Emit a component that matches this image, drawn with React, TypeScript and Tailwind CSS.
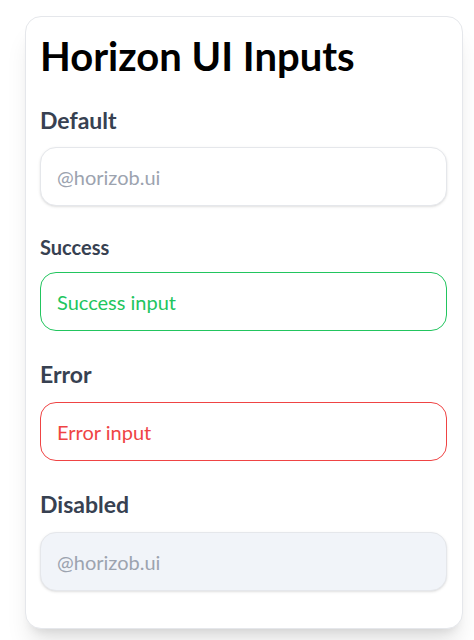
const font = { fontFamily: 'Lato, "Noto Sans", sans-serif' };

type FieldProps = {
  label: string;
  labelClass: string;
  inputClass: string;
  value?: string;
  placeholder?: string;
  disabled?: boolean;
};

const Field = ({ label, labelClass, inputClass, value, placeholder, disabled }: FieldProps) => (
  <div className="flex flex-col">
    <label className={`font-bold text-[#374151] ${labelClass}`}>{label}</label>
    <input
      readOnly
      disabled={disabled}
      defaultValue={value}
      placeholder={placeholder}
      className={`h-[59px] w-full rounded-2xl border px-4 text-[20px] outline-none placeholder:text-[#9ca3af] ${inputClass}`}
    />
  </div>
);

export default function App() {
  return (
    <div className="min-h-screen bg-white pt-4" style={font}>
      <div className="ml-[25px] w-[438px] rounded-2xl border border-[#e5e7eb] bg-white pb-[37px] pl-[14px] pr-[15px] pt-[13px] shadow-xl">
        <h1 className="text-[40px] font-bold leading-[52px] text-black">Horizon UI Inputs</h1>

        <div className="mt-[23px] flex flex-col gap-[28px]">
          <Field
            label="Default"
            labelClass="text-[23px] leading-[30px] mb-[12px]"
            inputClass="border-[#e5e7eb] bg-white shadow-sm"
            placeholder="@horizob.ui"
          />
          <Field
            label="Success"
            labelClass="text-[20px] leading-[26px] mb-[12px]"
            inputClass="border-[#22c55e] bg-white text-[#22c55e]"
            value="Success input"
          />
          <Field
            label="Error"
            labelClass="text-[23px] leading-[31px] mb-[12px]"
            inputClass="border-[#ef4444] bg-white text-[#ef4444]"
            value="Error input"
          />
          <Field
            label="Disabled"
            labelClass="text-[23px] leading-[31px] mb-[12px]"
            inputClass="border-[#e5e7eb] bg-[#f1f4f9] shadow-sm"
            placeholder="@horizob.ui"
            disabled
          />
        </div>
      </div>
    </div>
  );
}
